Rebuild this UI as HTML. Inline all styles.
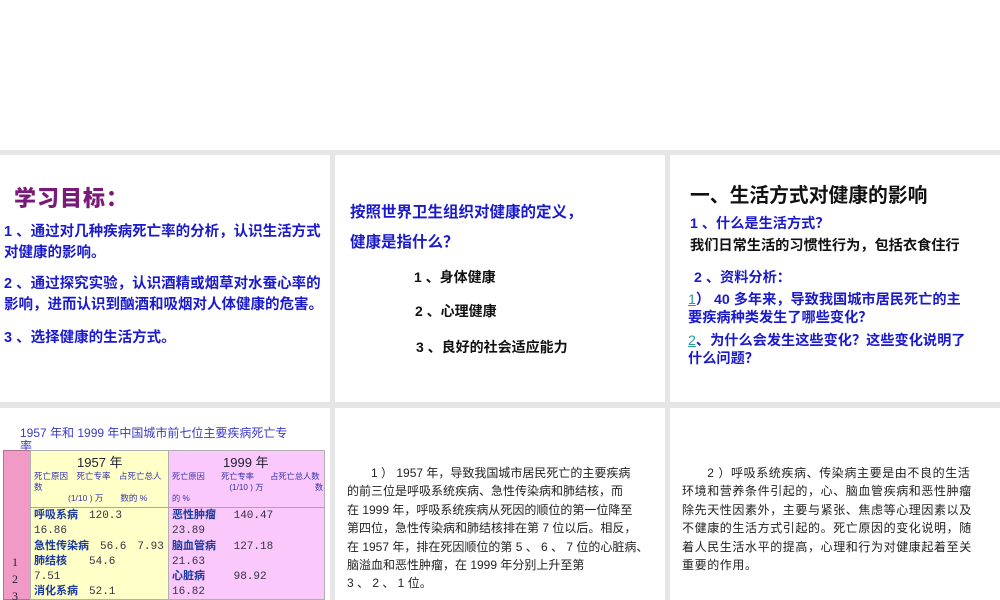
<!DOCTYPE html>
<html><head><meta charset="utf-8"><style>
*{margin:0;padding:0;box-sizing:border-box}
body{width:1000px;height:600px;background:#fff;position:relative;overflow:hidden;font-family:"Liberation Sans","Noto Sans CJK SC",sans-serif}
.g{position:absolute;background:#e6e6e6}
.p{position:absolute;background:#fff;overflow:hidden}
.t{position:absolute;white-space:nowrap}
.b{color:#1a1acc;font-weight:bold}
.k{color:#111;font-weight:bold}
.n{color:#222;font-size:12px}
</style></head><body>
<div class="g" style="left:0;top:150px;width:1000px;height:450px"></div>
<div class="p" style="left:0;top:155px;width:330px;height:247px">
 <div class="t" style="left:14px;top:26px;font-size:22px;font-weight:900;color:#7a1a78;letter-spacing:1px">学习目标：</div>
 <div class="t b" style="left:4px;top:67px;font-size:14.5px;line-height:21px">1 、通过对几种疾病死亡率的分析，认识生活方式<br>对健康的影响。</div>
 <div class="t b" style="left:4px;top:119px;font-size:14.5px;line-height:21px">2 、通过探究实验，认识酒精或烟草对水蚕心率的<br>影响，进而认识到酗酒和吸烟对人体健康的危害。</div>
 <div class="t b" style="left:4px;top:171px;font-size:14.5px">3 、选择健康的生活方式。</div>
</div>
<div class="p" style="left:335px;top:155px;width:330px;height:247px">
 <div class="t b" style="left:15px;top:45px;font-size:15.5px">按照世界卫生组织对健康的定义，</div>
 <div class="t b" style="left:15px;top:75px;font-size:15.5px">健康是指什么？</div>
 <div class="t k" style="left:79px;top:112px;font-size:14px">1 、身体健康</div>
 <div class="t k" style="left:80px;top:146px;font-size:14px">2 、心理健康</div>
 <div class="t k" style="left:81px;top:182px;font-size:14px">3 、良好的社会适应能力</div>
</div>
<div class="p" style="left:670px;top:155px;width:330px;height:247px">
 <div class="t k" style="left:20px;top:24px;font-size:19.8px">一、生活方式对健康的影响</div>
 <div class="t b" style="left:20px;top:58px;font-size:14.2px">1 、什么是生活方式？</div>
 <div class="t k" style="left:20px;top:80px;font-size:14.2px">我们日常生活的习惯性行为，包括衣食住行</div>
 <div class="t b" style="left:24px;top:112px;font-size:14.2px">2 、资料分析：</div>
 <div class="t b" style="left:18px;top:136px;font-size:14.2px;line-height:18px"><span style="color:#2a9a9a;font-weight:normal;text-decoration:underline">1</span>） 40 多年来，导致我国城市居民死亡的主<br>要疾病种类发生了哪些变化？</div>
 <div class="t b" style="left:18px;top:177px;font-size:14.2px;line-height:18px"><span style="color:#2a9a9a;font-weight:normal;text-decoration:underline">2</span>、为什么会发生这些变化？这些变化说明了<br>什么问题？</div>
</div>
<div class="p" style="left:0;top:408px;width:330px;height:192px">
 <div class="t" style="left:20px;top:19px;font-size:12px;color:#3a3ac8;line-height:13px">1957 年和 1999 年中国城市前七位主要疾病死亡专<br>率</div>
 <div style="position:absolute;left:3px;top:42px;width:28px;height:150px;background:#f29ac6;border:1px solid #b07090"></div>
 <div style="position:absolute;left:30px;top:42px;width:139px;height:150px;background:#ffffc8;border:1px solid #b0b0b0"></div>
 <div style="position:absolute;left:168px;top:42px;width:157px;height:150px;background:#fac8fa;border:1px solid #b0b0b0"></div>
 <div style="position:absolute;left:30px;top:99px;width:295px;height:1px;background:#b0a0b0"></div>
 <div class="t" style="left:77px;top:44px;font-size:13px;color:#223">1957 年</div>
 <div class="t" style="left:223px;top:44px;font-size:13px;color:#223">1999 年</div>
 <div class="t" style="left:34px;top:63px;font-size:8.5px;color:#33a;line-height:11px">死亡原因　死亡专率　占死亡总人<br>数<br>　　　　(1/10 ) 万　　数的 %</div>
 <div class="t" style="left:172px;top:63px;font-size:8.2px;color:#33a;line-height:11px">死亡原因　　死亡专率　　占死亡总人数<br>　　　　　　　(1/10 ) 万　　　　　　 数<br>的 %</div>
 <div class="t" style="left:34px;top:101px;font-size:11px;color:#334;line-height:15.3px;font-family:'Liberation Mono','Noto Sans CJK SC',monospace"><b style="color:#1a3aa0">呼吸系病</b>　120.3<br>16.86<br><b style="color:#1a3aa0">急性传染病</b>　56.6　7.93<br><b style="color:#1a3aa0">肺结核</b>　　54.6<br>7.51<br><b style="color:#1a3aa0">消化系病</b>　52.1</div>
 <div class="t" style="left:172px;top:101px;font-size:11px;color:#334;line-height:15.3px;font-family:'Liberation Mono','Noto Sans CJK SC',monospace"><b style="color:#1a3aa0">恶性肿瘤</b>　 140.47<br>23.89<br><b style="color:#1a3aa0">脑血管病</b>　 127.18<br>21.63<br><b style="color:#1a3aa0">心脏病</b>　　 98.92<br>16.82</div>
 <div class="t" style="left:12px;top:146px;font-size:12px;color:#223;line-height:17px;font-family:'Liberation Serif',serif">1<br>2<br>3</div>
</div>
<div class="p" style="left:335px;top:408px;width:330px;height:192px">
 <div class="t n" style="left:12px;top:56px;line-height:18.4px">　　1 ） 1957 年，导致我国城市居民死亡的主要疾病<br>的前三位是呼吸系统疾病、急性传染病和肺结核，而<br>在 1999 年，呼吸系统疾病从死因的顺位的第一位降至<br>第四位，急性传染病和肺结核排在第 7 位以后。相反，<br>在 1957 年，排在死因顺位的第 5 、 6 、 7 位的心脏病、<br>脑溢血和恶性肿瘤，在 1999 年分别上升至第<br>3 、 2 、 1 位。</div>
</div>
<div class="p" style="left:670px;top:408px;width:330px;height:192px">
 <div class="t n" style="left:12px;top:56px;line-height:18.4px;letter-spacing:0.6px">　　2 ）呼吸系统疾病、传染病主要是由不良的生活<br>环境和营养条件引起的，心、脑血管疾病和恶性肿瘤<br>除先天性因素外，主要与紧张、焦虑等心理因素以及<br>不健康的生活方式引起的。死亡原因的变化说明，随<br>着人民生活水平的提高，心理和行为对健康起着至关<br>重要的作用。</div>
</div>
</body></html>
